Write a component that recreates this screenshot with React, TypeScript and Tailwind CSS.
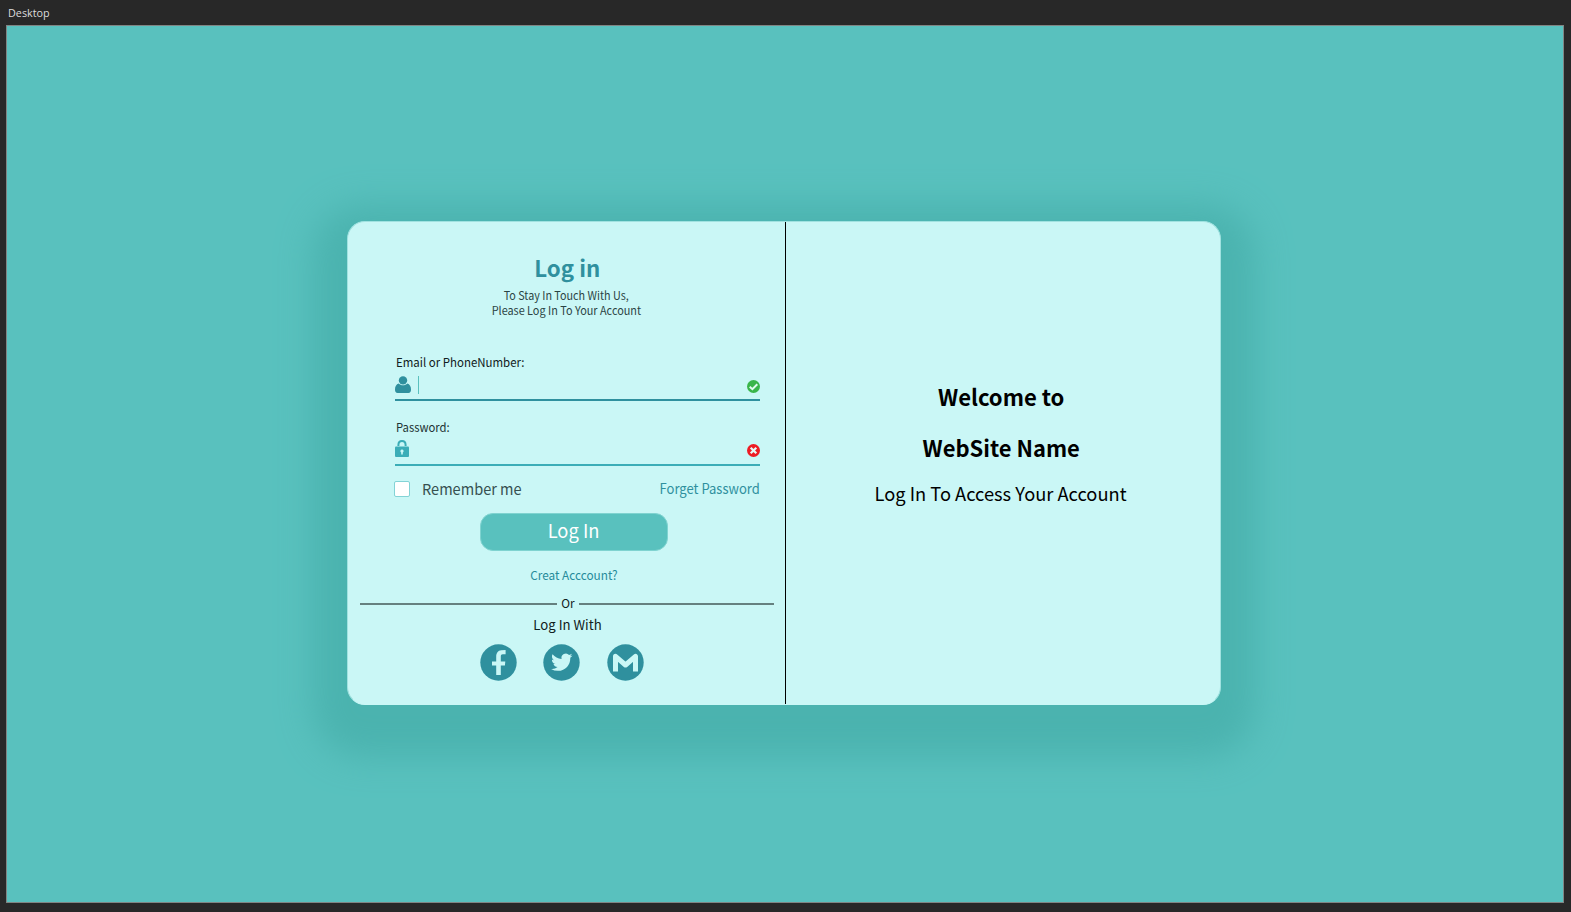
import type { ReactNode } from "react";

function UserIcon() {
  return (
    <svg width="16" height="17" viewBox="0 0 16 17" fill="#2f909e">
      <path d="M0 13.5C0 10.4 1.3 8.3 3.6 7.5C4.8 8.7 6.3 9.3 8 9.3S11.200 8.700 12.400 7.500C14.700 8.300 16 10.400 16 13.500C16 15.800 15.200 17 13.400 17H2.600C.8 17 0 15.800 0 13.500Z" />
      <circle cx="8" cy="4.400" r="4.200" />
    </svg>
  );
}

function LockIcon() {
  return (
    <svg width="14" height="17" viewBox="0 0 14 17" fill="none">
      <path d="M3.400 6V4.900C3.400 2.500 4.900 1 7 1S10.600 2.500 10.600 4.900V6" stroke="#3badb7" strokeWidth="2" />
      <rect y="6.500" width="14" height="10.500" rx="1" fill="#3badb7" />
      <path d="M7 9.600a1.600 1.600 0 0 1 .8 3V14.500H6.200V12.600a1.600 1.600 0 0 1 .8-3Z" fill="#caf7f6" />
    </svg>
  );
}

function CheckIcon() {
  return (
    <svg width="13" height="13" viewBox="0 0 13 13" fill="none">
      <circle cx="6.500" cy="6.500" r="6.500" fill="#39b54a" />
      <path d="M2.700 6.700L5.400 9.200L10.300 4.200" stroke="#e0faf0" strokeWidth="2" />
    </svg>
  );
}

function ErrorIcon() {
  return (
    <svg width="13" height="13" viewBox="0 0 13 13" fill="none">
      <circle cx="6.500" cy="6.500" r="6.500" fill="#ed1c24" />
      <path d="M3.700 3.700L9.300 9.300M9.300 3.700L3.700 9.300" stroke="#e6faf8" strokeWidth="2.200" />
    </svg>
  );
}

function Social({ label, children }: { label: string; children: ReactNode }) {
  return (
    <button aria-label={label} className="size-[37px]">
      <svg width="37" height="37" viewBox="0 0 37 37">
        <circle cx="18.500" cy="18.500" r="18.200" fill="#2f909e" />
        {children}
      </svg>
    </button>
  );
}

export default function App() {
  return (
    <div className="flex h-[912px] w-[1571px] flex-col overflow-hidden bg-[#282828] pr-[7px] pb-[9px] pl-[6px] font-['Noto_Sans_CJK_SC','Open_Sans',sans-serif] whitespace-nowrap">
      <div className="h-[25px] pl-[2px] font-['Open_Sans',sans-serif] text-[11px] leading-[26px] text-[#dcdcdc]">
        <span className="inline-block origin-left scale-x-[0.98]">Desktop</span>
      </div>
      <div className="flex-1 border border-[#808584] bg-[#59c1be] pt-[195px] pl-[340px]">
        <div className="flex h-[484px] w-[874px] rounded-[18px] border border-[#a0e2e0] border-b-[#caf7f6] bg-[#caf7f6] shadow-[0_18px_34px_34px_#4bb3af]">
          <section className="flex w-[438px] flex-col border-r border-black">
            <h1 className="mt-[31px] h-[28px] pl-px text-center text-[22.500px] leading-[28px] font-bold text-[#2f909e]">
              <span className="inline-block scale-x-[0.99]">Log in</span>
            </h1>
            <p className="mt-[7px] text-center text-[11.400px] leading-[15px] text-[#2b4444]">
              <span className="inline-block scale-x-[0.945]">To Stay In Touch With Us,</span>
              <br />
              <span className="inline-block scale-x-[0.953]">Please Log In To Your Account</span>
            </p>
            <div className="mt-[35px] ml-[47px] w-[365px]">
              <label className="block h-[19px] pl-px text-[12px] leading-[18px] text-[#102020]">
                <span className="inline-block origin-left scale-x-[0.955]">Email or PhoneNumber:</span>
              </label>
              <div className="flex h-[29px] items-start border-b-2 border-[#2f909e] pt-[4px]">
                <UserIcon />
                <span className="ml-[7px] h-[18px] w-px bg-[#59c1be]" />
                <span className="mt-[4px] ml-auto"><CheckIcon /></span>
              </div>
              <label className="mt-[17px] block h-[18px] pl-px text-[12px] leading-[18px] text-[#1d3333]">
                <span className="inline-block origin-left scale-x-[0.94]">Password:</span>
              </label>
              <div className="flex h-[30px] items-start border-b-2 border-[#3badb7] pt-[4px]">
                <LockIcon />
                <span className="mt-[4px] ml-auto"><ErrorIcon /></span>
              </div>
              <div className="mt-[12px] flex h-[22px] text-[15px] leading-[22px]">
                <span className="mt-[3px] -ml-px size-[16px] rounded-[2px] border border-[#83d3d6] bg-white" />
                <span className="ml-[12px] origin-left scale-x-[0.97] text-[#365050]">Remember me</span>
                <a className="-mt-px ml-auto origin-right scale-x-[0.93] text-[14px] text-[#2f909e]">Forget Password</a>
              </div>
            </div>
            <button className="mt-[13px] ml-[132px] h-[38px] w-[188px] rounded-[13px] border border-[#7fd3d0] bg-[#59c1be] pb-[4px] text-[18.800px] leading-[28px] text-white">
              <span className="inline-block scale-x-[0.975]">Log In</span>
            </button>
            <a className="mt-[15px] ml-[132px] h-[18px] w-[188px] text-center text-[12.400px] leading-[18px] text-[#268b9b]">
              <span className="inline-block scale-x-[0.95]">Creat Acccount?</span>
            </a>
            <div className="mt-[11px] ml-[12px] flex h-[18px] w-[414px] items-center text-[12.300px] leading-[18px] text-[#102020]">
              <span className="h-[2px] w-[197px] bg-[#65807f]" />
              <span className="-mt-[2px] w-[22px] text-center"><span className="inline-block scale-x-[0.96]">Or</span></span>
              <span className="h-[2px] w-[195px] bg-[#65807f]" />
            </div>
            <p className="mt-[3px] pl-[2px] text-center text-[13.300px] leading-[18px] text-[#102020]">
              <span className="inline-block scale-x-[0.99]">Log In With</span>
            </p>
            <div className="mt-[10px] ml-[132px] flex gap-[26.400px]">
              <Social label="Facebook">
                <path fill="#caf7f6" d="M16.200 31V21.400H12V17.500H16.200V12.800C16.200 9.200 17.900 6.400 21.200 6.200L25.600 6.100V10.200H22.800C21.500 10.200 20.800 11 20.800 12.400V17.500H25.300L24.900 21.400H20.800V31Z" />
              </Social>
              <Social label="Twitter">
                <path fill="#caf7f6" transform="translate(8.100 7.500) scale(.89)" d="M23.950 4.570a10 10 0 0 1-2.820.780 4.960 4.960 0 0 0 2.160-2.730c-.950.560-2 .960-3.120 1.180a4.920 4.920 0 0 0-8.390 4.490C7.690 8.090 4.070 6.130 1.640 3.160a4.820 4.820 0 0 0-.670 2.480c0 1.710.870 3.210 2.190 4.100a4.900 4.900 0 0 1-2.230-.620v.060a4.920 4.920 0 0 0 3.950 4.830 5 5 0 0 1-2.210.080 4.940 4.940 0 0 0 4.600 3.420A9.870 9.870 0 0 1 0 19.540a14 14 0 0 0 7.550 2.210c9.050 0 14-7.500 14-13.980 0-.210 0-.420-.020-.630a9.940 9.940 0 0 0 2.460-2.550z" />
              </Social>
              <Social label="Gmail">
                <path fill="none" stroke="#caf7f6" strokeWidth="5" strokeLinejoin="round" d="M8.500 27.600V12.300L18.500 21L28.500 12.300V27.600" />
              </Social>
            </div>
          </section>
          <section className="flex-1 pr-[4px] text-center text-black">
            <h2 className="mt-[158px] text-[22.400px] leading-[32px] font-bold">
              <span className="inline-block scale-x-[0.985]">Welcome to</span>
            </h2>
            <h2 className="mt-[19px] text-[22.400px] leading-[32px] font-bold">
              <span className="inline-block scale-x-[0.98]">WebSite Name</span>
            </h2>
            <p className="mt-[16px] text-[18.500px] leading-[28px]">
              <span className="inline-block scale-x-[0.988]">Log In To Access Your Account</span>
            </p>
          </section>
        </div>
      </div>
    </div>
  );
}
